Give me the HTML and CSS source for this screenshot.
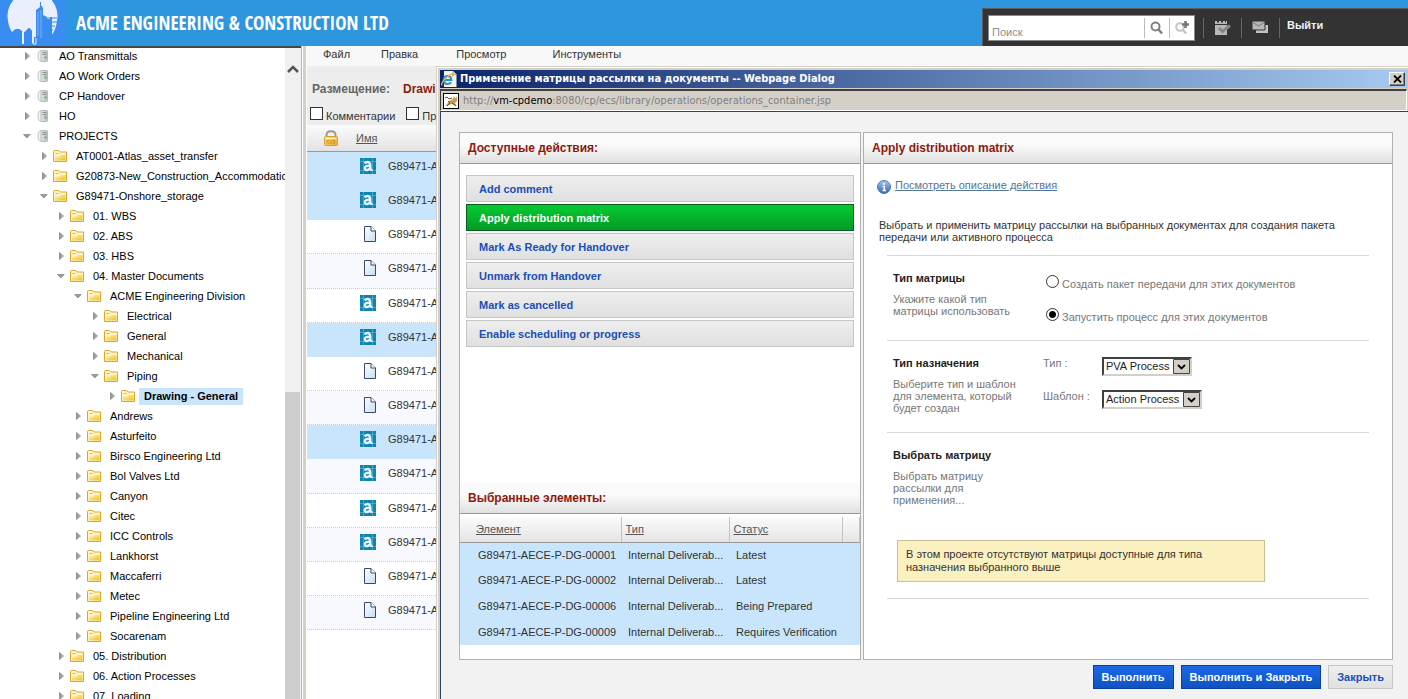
FILE: index.html
```html
<!DOCTYPE html>
<html lang="ru">
<head>
<meta charset="utf-8">
<title>ACME Engineering &amp; Construction Ltd</title>
<link rel="stylesheet" href="styles.css">
</head>
<body>
<svg class="defs" width="0" height="0" aria-hidden="true">
  <defs>
    <linearGradient id="gFolder" x1="0" y1="0" x2="1" y2="1"><stop offset="0" stop-color="#fff3b8"/><stop offset="1" stop-color="#f0c020"/></linearGradient>
    <linearGradient id="gArrow" x1="0" y1="0" x2="1" y2="0"><stop offset="0" stop-color="#8a8a8a"/><stop offset="1" stop-color="#c4c4c4"/></linearGradient>
    <linearGradient id="gDoc" x1="0" y1="0" x2="1" y2="1"><stop offset="0" stop-color="#fff"/><stop offset="1" stop-color="#c4dcf2"/></linearGradient>
    <linearGradient id="gServer" x1="0" y1="0" x2="1" y2="0"><stop offset="0" stop-color="#e6e6e6"/><stop offset="1" stop-color="#bdbdbd"/></linearGradient>
    <linearGradient id="gLock" x1="0" y1="0" x2="1" y2="1"><stop offset="0" stop-color="#ffe58a"/><stop offset="1" stop-color="#e8a628"/></linearGradient>
    <linearGradient id="gInfo" x1="0" y1="0" x2="0" y2="1"><stop offset="0" stop-color="#a8c8ea"/><stop offset="1" stop-color="#2f66b0"/></linearGradient>
    <symbol id="closed" viewBox="0 0 8 8"><path d="M2.500 .5V7.500L6.500 4Z" fill="url(#gArrow)" stroke="#8c8c8c" stroke-width=".8"/></symbol>
    <symbol id="open" viewBox="0 0 8 8"><path d="M.5 2.500H7.200L3.850 6Z" fill="#9a9a9a" stroke="#8c8c8c" stroke-width=".8"/></symbol>
    <symbol id="folder" viewBox="0 0 14 12"><path d="M.5 1.500Q.5.5 1.500.5H5.500L7 2H13.500V11.500H.5Z" fill="#fff4c4" stroke="#dba62e"/><path d="M2 9.800V6.500H6L7.500 5H12.500V10.500H2Z" fill="url(#gFolder)"/><path d="M2.500 3.500H5.500" stroke="#e6b93c"/></symbol>
    <symbol id="server" viewBox="0 0 14 14"><path d="M3.500 2Q2 3 2 7T3.500 12L5.500 12.500V1.500Z" fill="#f4f4f4" stroke="#c4c4c4"/><rect x="5" y="1.500" width="6.500" height="11" rx="1" fill="url(#gServer)" stroke="#bababa"/><path d="M6.500 3.500H10.500M6.500 5.500H10.500" stroke="#8e8e8e"/><path d="M8.500 8.500H10.500" stroke="#47c047" stroke-width="2"/></symbol>
    <symbol id="doc" viewBox="0 0 16 16"><path d="M4.500.5H11L15.500 5V15.500H4.500Z" fill="url(#gDoc)" stroke="#384a66"/><path d="M11 .5V5H15.500" fill="#fff" stroke="#384a66"/></symbol>
    <symbol id="drawing" viewBox="0 0 16 16"><rect width="16" height="16" fill="#1083b0"/><path d="M0 3.500H16M3.500 0V16M12.500 0V16M0 12.500H16" stroke="#6bbbd8" stroke-width=".6"/><path d="M4.500 5.300Q7.500 3 9.500 4.800Q10.300 5.500 10.300 8V10Q10.300 12.300 12.500 11.800M10.300 7.800Q5 7.300 4.800 10Q5 12.500 7.300 12Q9.300 11.500 10.300 9.800" fill="none" stroke="#e6f4fa" stroke-width="2.400"/></symbol>
  </defs>
</svg>
<div class="app">
  <header class="banner">
    <svg class="logo" viewBox="0 0 65 46" preserveAspectRatio="none" aria-label="ACME">
      <rect width="65" height="46" fill="#3a8df0"/>
      <path d="M8 21A25 25 0 1 1 57 21Q56 30 51 36V19H46V40H47V17L43 15V8L41 5V2H40V7L36 10V37H34V43H32V31Q29 25 26 31L24 32V44H22V31Q17 26 12 32Q9 28 8 21Z" fill="#e9effd"/>
      <path d="M46 18H57M46 22H57M46 26H55M46 30H53M46 34H52M46 38H50" stroke="#3a8df0"/>
      <path d="M46 19V40M51 17V38" stroke="#3a8df0" stroke-width="2"/>
      <path d="M38 12V36M41 10V38" stroke="#8fb9f5" stroke-width=".8"/>
      <path d="M33 36V44H36V38" fill="none" stroke="#e9effd"/>
    </svg>
    <h1 class="brand">ACME ENGINEERING &amp; CONSTRUCTION LTD</h1>
    <div class="tools">
      <form class="search">
        <input class="search-input" type="text" placeholder="Поиск" aria-label="Поиск">
        <button class="search-btn" type="button" aria-label="Найти"><svg width="14" height="14" viewBox="0 0 14 14"><circle cx="5.500" cy="5.500" r="4" fill="none" stroke="#808080" stroke-width="2"/><path d="M8.500 8.500L12 12.500" stroke="#808080" stroke-width="2.500"/></svg></button>
        <button class="search-btn" type="button" aria-label="Расширенный поиск"><svg width="14" height="14" viewBox="0 0 14 14"><circle cx="5" cy="6" r="3.800" fill="none" stroke="#c4c4c4" stroke-width="2"/><path d="M8 9L11 12.500" stroke="#c4c4c4" stroke-width="2.500"/><path d="M10.500 0V7M7 3.500H14" stroke="#777" stroke-width="2.600"/></svg></button>
      </form>
      <button class="tool" type="button" aria-label="Задачи"><svg width="16" height="14" viewBox="0 0 16 14"><path d="M0 0H2V1.500H4V0H6V1.500H8V0H10V1.500H11V0H12V3H0ZM0 4H12V14H0Z" fill="#b8b8b8"/><path d="M4 7L7.500 10.500L15 4.500" fill="none" stroke="#858585" stroke-width="3"/></svg></button>
      <button class="tool" type="button" aria-label="Сообщения"><svg width="17" height="13" viewBox="0 0 17 13"><path d="M4 4H16V12H4Z" fill="#c4c4c4"/><path d="M0 0H13V9H0Z" fill="#b8b8b8" stroke="#333"/><path d="M1 1.500L6.500 5L12 1.500" fill="none" stroke="#777"/></svg></button>
      <a class="logout" href="#">Выйти</a>
    </div>
  </header>
  <div class="main">
    <nav class="sidebar" aria-label="Проекты">
      <ul class="tree">
        <li class="node"><button class="tw" aria-label="Развернуть"><svg><use href="#closed"/></svg></button><svg class="ico"><use href="#server"/></svg><a href="#">AO Transmittals</a></li>
        <li class="node"><button class="tw" aria-label="Развернуть"><svg><use href="#closed"/></svg></button><svg class="ico"><use href="#server"/></svg><a href="#">AO Work Orders</a></li>
        <li class="node"><button class="tw" aria-label="Развернуть"><svg><use href="#closed"/></svg></button><svg class="ico"><use href="#server"/></svg><a href="#">CP Handover</a></li>
        <li class="node"><button class="tw" aria-label="Развернуть"><svg><use href="#closed"/></svg></button><svg class="ico"><use href="#server"/></svg><a href="#">HO</a></li>
        <li class="node"><button class="tw" aria-label="Свернуть"><svg><use href="#open"/></svg></button><svg class="ico"><use href="#server"/></svg><a href="#">PROJECTS</a></li>
        <li class="node d1"><button class="tw" aria-label="Развернуть"><svg><use href="#closed"/></svg></button><svg class="ico"><use href="#folder"/></svg><a href="#">AT0001-Atlas_asset_transfer</a></li>
        <li class="node d1"><button class="tw" aria-label="Развернуть"><svg><use href="#closed"/></svg></button><svg class="ico"><use href="#folder"/></svg><a href="#">G20873-New_Construction_Accommodation</a></li>
        <li class="node d1"><button class="tw" aria-label="Свернуть"><svg><use href="#open"/></svg></button><svg class="ico"><use href="#folder"/></svg><a href="#">G89471-Onshore_storage</a></li>
        <li class="node d2"><button class="tw" aria-label="Развернуть"><svg><use href="#closed"/></svg></button><svg class="ico"><use href="#folder"/></svg><a href="#">01. WBS</a></li>
        <li class="node d2"><button class="tw" aria-label="Развернуть"><svg><use href="#closed"/></svg></button><svg class="ico"><use href="#folder"/></svg><a href="#">02. ABS</a></li>
        <li class="node d2"><button class="tw" aria-label="Развернуть"><svg><use href="#closed"/></svg></button><svg class="ico"><use href="#folder"/></svg><a href="#">03. HBS</a></li>
        <li class="node d2"><button class="tw" aria-label="Свернуть"><svg><use href="#open"/></svg></button><svg class="ico"><use href="#folder"/></svg><a href="#">04. Master Documents</a></li>
        <li class="node d3"><button class="tw" aria-label="Свернуть"><svg><use href="#open"/></svg></button><svg class="ico"><use href="#folder"/></svg><a href="#">ACME Engineering Division</a></li>
        <li class="node d4"><button class="tw" aria-label="Развернуть"><svg><use href="#closed"/></svg></button><svg class="ico"><use href="#folder"/></svg><a href="#">Electrical</a></li>
        <li class="node d4"><button class="tw" aria-label="Развернуть"><svg><use href="#closed"/></svg></button><svg class="ico"><use href="#folder"/></svg><a href="#">General</a></li>
        <li class="node d4"><button class="tw" aria-label="Развернуть"><svg><use href="#closed"/></svg></button><svg class="ico"><use href="#folder"/></svg><a href="#">Mechanical</a></li>
        <li class="node d4"><button class="tw" aria-label="Свернуть"><svg><use href="#open"/></svg></button><svg class="ico"><use href="#folder"/></svg><a href="#">Piping</a></li>
        <li class="node d5 current"><button class="tw" aria-label="Развернуть"><svg><use href="#closed"/></svg></button><svg class="ico"><use href="#folder"/></svg><a href="#">Drawing - General</a></li>
        <li class="node d3"><button class="tw" aria-label="Развернуть"><svg><use href="#closed"/></svg></button><svg class="ico"><use href="#folder"/></svg><a href="#">Andrews</a></li>
        <li class="node d3"><button class="tw" aria-label="Развернуть"><svg><use href="#closed"/></svg></button><svg class="ico"><use href="#folder"/></svg><a href="#">Asturfeito</a></li>
        <li class="node d3"><button class="tw" aria-label="Развернуть"><svg><use href="#closed"/></svg></button><svg class="ico"><use href="#folder"/></svg><a href="#">Birsco Engineering Ltd</a></li>
        <li class="node d3"><button class="tw" aria-label="Развернуть"><svg><use href="#closed"/></svg></button><svg class="ico"><use href="#folder"/></svg><a href="#">Bol Valves Ltd</a></li>
        <li class="node d3"><button class="tw" aria-label="Развернуть"><svg><use href="#closed"/></svg></button><svg class="ico"><use href="#folder"/></svg><a href="#">Canyon</a></li>
        <li class="node d3"><button class="tw" aria-label="Развернуть"><svg><use href="#closed"/></svg></button><svg class="ico"><use href="#folder"/></svg><a href="#">Citec</a></li>
        <li class="node d3"><button class="tw" aria-label="Развернуть"><svg><use href="#closed"/></svg></button><svg class="ico"><use href="#folder"/></svg><a href="#">ICC Controls</a></li>
        <li class="node d3"><button class="tw" aria-label="Развернуть"><svg><use href="#closed"/></svg></button><svg class="ico"><use href="#folder"/></svg><a href="#">Lankhorst</a></li>
        <li class="node d3"><button class="tw" aria-label="Развернуть"><svg><use href="#closed"/></svg></button><svg class="ico"><use href="#folder"/></svg><a href="#">Maccaferri</a></li>
        <li class="node d3"><button class="tw" aria-label="Развернуть"><svg><use href="#closed"/></svg></button><svg class="ico"><use href="#folder"/></svg><a href="#">Metec</a></li>
        <li class="node d3"><button class="tw" aria-label="Развернуть"><svg><use href="#closed"/></svg></button><svg class="ico"><use href="#folder"/></svg><a href="#">Pipeline Engineering Ltd</a></li>
        <li class="node d3"><button class="tw" aria-label="Развернуть"><svg><use href="#closed"/></svg></button><svg class="ico"><use href="#folder"/></svg><a href="#">Socarenam</a></li>
        <li class="node d2"><button class="tw" aria-label="Развернуть"><svg><use href="#closed"/></svg></button><svg class="ico"><use href="#folder"/></svg><a href="#">05. Distribution</a></li>
        <li class="node d2"><button class="tw" aria-label="Развернуть"><svg><use href="#closed"/></svg></button><svg class="ico"><use href="#folder"/></svg><a href="#">06. Action Processes</a></li>
        <li class="node d2"><button class="tw" aria-label="Развернуть"><svg><use href="#closed"/></svg></button><svg class="ico"><use href="#folder"/></svg><a href="#">07. Loading</a></li>
      </ul>
      <div class="scrollbar">
        <button class="scroll-up" type="button" aria-label="Вверх"><svg width="12" height="8" viewBox="0 0 12 8"><path d="M1 7L6 2L11 7" fill="none" stroke="#555" stroke-width="2.500"/></svg></button>
        <div class="scroll-thumb"></div>
      </div>
    </nav>
    <div class="splitter"></div>
    <main class="content">
      <div class="menubar">
        <a href="#">Файл</a><a href="#">Правка</a><a href="#">Просмотр</a><a href="#">Инструменты</a>
      </div>
      <div class="location">
        <div class="place"><b class="place-label">Размещение:</b><b class="place-name">Drawi</b></div>
        <div class="filters">
          <label><input class="check" type="checkbox"><span>Комментарии</span></label>
          <label><input class="check" type="checkbox"><span>Пр</span></label>
        </div>
      </div>
      <div class="list-head">
        <svg width="16" height="16" viewBox="0 0 16 16" aria-hidden="true"><path d="M3.500 8V5Q3.500 1.300 8 1.300T12.500 5V8" fill="none" stroke="#9a9a9a" stroke-width="2"/><rect x="1.500" y="6.500" width="13" height="9" rx="1" fill="url(#gLock)" stroke="#dba02c"/><path d="M2.500 8.500H13.500" stroke="#fff0a8"/><path d="M4 10V13.500M5 10.500H6.500M5 13H6.500M8 10V14M9.500 10.500H11M11.500 10V13.500M9.500 13H11" stroke="#c98a18"/></svg>
        <a href="#">Имя</a>
      </div>
      <ul class="files">
        <li class="file on"><svg><use href="#drawing"/></svg><span>G89471-A</span></li>
        <li class="file on"><svg><use href="#drawing"/></svg><span>G89471-A</span></li>
        <li class="file"><svg><use href="#doc"/></svg><span>G89471-A</span></li>
        <li class="file"><svg><use href="#doc"/></svg><span>G89471-A</span></li>
        <li class="file"><svg><use href="#drawing"/></svg><span>G89471-A</span></li>
        <li class="file on"><svg><use href="#drawing"/></svg><span>G89471-A</span></li>
        <li class="file"><svg><use href="#doc"/></svg><span>G89471-A</span></li>
        <li class="file"><svg><use href="#doc"/></svg><span>G89471-A</span></li>
        <li class="file on"><svg><use href="#drawing"/></svg><span>G89471-A</span></li>
        <li class="file"><svg><use href="#drawing"/></svg><span>G89471-A</span></li>
        <li class="file"><svg><use href="#drawing"/></svg><span>G89471-A</span></li>
        <li class="file"><svg><use href="#drawing"/></svg><span>G89471-A</span></li>
        <li class="file"><svg><use href="#doc"/></svg><span>G89471-A</span></li>
        <li class="file"><svg><use href="#doc"/></svg><span>G89471-A</span></li>
      </ul>
    </main>
  </div>

  <section class="dialog" role="dialog" aria-labelledby="dlg-title">
    <div class="titlebar">
      <svg width="16" height="16" viewBox="0 0 16 16" aria-hidden="true"><path d="M3 0H12L15.500 3.500V16H3Z" fill="#f6f3e4"/><path d="M12 0V3.500H15.500" fill="#d2cdb8" stroke="#8c8878" stroke-width=".6"/><path d="M2.800 9H10.300Q10 5 6.500 5T2.800 9Q3 13 6.500 13Q9 13 10 11.200" fill="none" stroke="#2b8fdc" stroke-width="2.200"/><path d="M1 14.500Q-.5 12 5 7T12.300 3Q12.500 4 11 5.500" fill="none" stroke="#e8bd2c" stroke-width="1.300"/></svg>
      <h2 class="dialog-title" id="dlg-title">Применение матрицы рассылки на документы -- Webpage Dialog</h2>
      <button class="close" type="button" aria-label="Закрыть окно"><svg width="9" height="8" viewBox="0 0 9 8"><path d="M1 .5L8 7.500M8 .5L1 7.500" stroke="#000" stroke-width="1.800"/></svg></button>
    </div>
    <div class="address">
      <svg width="16" height="16" viewBox="0 0 16 16" aria-hidden="true"><rect x=".5" y=".5" width="15" height="15" fill="#fff" stroke="#000"/><path d="M6 8L10 6L11 3L12 5H13L14 3V8L12 10L14 13L9 11L6 12L2 13L5 10Z" fill="#c99b50"/><path d="M2 5L4 4L6 6L9 5M5 8L7 10L4 13M9 10L13 13" fill="none" stroke="#5a4a36"/></svg>
      <span class="url">http://<b>vm-cpdemo</b>:8080/cp/ecs/library/operations/operations_container.jsp</span>
    </div>
    <div class="dialog-body">
      <div class="panels">
        <section class="panel panel-left">
          <h3 class="panel-title">Доступные действия:</h3>
          <div class="actions">
            <button class="action" type="button">Add comment</button>
            <button class="action active" type="button">Apply distribution matrix</button>
            <button class="action" type="button">Mark As Ready for Handover</button>
            <button class="action" type="button">Unmark from Handover</button>
            <button class="action" type="button">Mark as cancelled</button>
            <button class="action" type="button">Enable scheduling or progress</button>
          </div>
          <h3 class="panel-title">Выбранные элементы:</h3>
          <table class="items">
            <thead><tr><th class="c1"><a href="#">Элемент</a></th><th class="c2"><a href="#">Тип</a></th><th class="c3"><a href="#">Статус</a></th><th></th></tr></thead>
            <tbody>
              <tr><td>G89471-AECE-P-DG-00001</td><td>Internal Deliverab...</td><td>Latest</td><td></td></tr>
              <tr><td>G89471-AECE-P-DG-00002</td><td>Internal Deliverab...</td><td>Latest</td><td></td></tr>
              <tr><td>G89471-AECE-P-DG-00006</td><td>Internal Deliverab...</td><td>Being Prepared</td><td></td></tr>
              <tr><td>G89471-AECE-P-DG-00009</td><td>Internal Deliverab...</td><td>Requires Verification</td><td></td></tr>
            </tbody>
          </table>
        </section>
        <section class="panel panel-right">
          <h3 class="panel-title">Apply distribution matrix</h3>
          <div class="form">
            <a class="info" href="#"><svg width="14" height="14" viewBox="0 0 14 14" aria-hidden="true"><circle cx="7" cy="7" r="6.500" fill="url(#gInfo)" stroke="#4b7ab8"/><path d="M7 3V5M5.500 6.500H7.300V10.500M5.500 10.500H9" fill="none" stroke="#fff" stroke-width="1.500"/></svg><span>Посмотреть описание действия</span></a>
            <p class="lead">Выбрать и применить матрицу рассылки на выбранных документах для создания пакета передачи или активного процесса</p>
            <div class="block">
              <div class="about"><h4>Тип матрицы</h4><p>Укажите какой тип матрицы использовать</p></div>
              <div class="radios">
                <label><input class="radio" type="radio" name="kind"><span>Создать пакет передачи для этих документов</span></label>
                <label><input class="radio" type="radio" name="kind" checked><span>Запустить процесс для этих документов</span></label>
              </div>
            </div>
            <div class="block">
              <div class="about"><h4>Тип назначения</h4><p>Выберите тип и шаблон для элемента, который будет создан</p></div>
              <div class="fields">
                <label for="type">Тип :</label><span class="pick"><select id="type"><option>PVA Process</option></select></span>
                <label for="tpl">Шаблон :</label><span class="pick"><select id="tpl"><option>Action Process</option></select></span>
              </div>
            </div>
            <div class="block">
              <div class="about"><h4>Выбрать матрицу</h4><p>Выбрать матрицу рассылки для применения...</p></div>
            </div>
            <p class="notice">В этом проекте отсутствуют матрицы доступные для типа назначения выбранного выше</p>
            <hr class="rule">
          </div>
        </section>
      </div>
      <div class="buttons">
        <button class="btn primary" type="button">Выполнить</button>
        <button class="btn primary" type="button">Выполнить и Закрыть</button>
        <button class="btn" type="button">Закрыть</button>
      </div>
    </div>
  </section>
</div>
</body>
</html>
```

FILE: styles.css
```css
* { box-sizing: border-box; }

body {
  margin: 0;
  font: 11px/12px "Liberation Sans", Arial, sans-serif;
  color: #333;
  background: #fff;
}

h1, h2, h3, h4, p, ul { margin: 0; padding: 0; }
ul { list-style: none; }
button, input, select { font: inherit; color: inherit; padding: 0; margin: 0; }
.defs { position: absolute; }

.app {
  position: relative;
  display: flex;
  flex-direction: column;
  height: 100vh;
  overflow: hidden;
}

/* Banner */
.banner {
  display: flex;
  flex: none;
  align-items: center;
  height: 46px;
  background: #2e95df;
}
.logo { flex: none; width: 65px; height: 46px; }
.brand {
  flex: 1;
  padding-left: 11px;
  font: 300 19px/28px "Open Sans Condensed", "Liberation Sans Narrow", "Roboto Condensed", sans-serif;
  color: #fff;
  white-space: nowrap;
}
.tools {
  display: flex;
  align-items: center;
  align-self: flex-end;
  width: 426px;
  height: 38px;
  padding-left: 5px;
  border: solid #5c5c5c;
  border-width: 1px 0 0 1px;
  background: #333;
}
.search {
  display: flex;
  width: 207px;
  height: 26px;
  margin-right: 8px;
  border: 1px solid #8a8a8a;
  background: #fff;
}
.search-input {
  flex: 1;
  min-width: 0;
  padding: 8px 3px 0;
  border: 0;
  background: none;
}
.search-input::placeholder { color: #8e8e8e; }
.search-btn {
  display: flex;
  align-items: center;
  justify-content: center;
  width: 25px;
  height: 20px;
  margin-top: 2px;
  border: 0;
  border-left: 1px solid #bbb;
  background: none;
}
.tool {
  display: flex;
  align-items: center;
  justify-content: center;
  width: 38px;
  height: 20px;
  border: 0;
  border-left: 1px solid #666;
  background: none;
}
.logout {
  height: 20px;
  padding: 1px 0 0 7px;
  border-left: 1px solid #666;
  font-weight: bold;
  color: #eaf4fb;
  text-decoration: none;
}

/* Tree */
.main { display: flex; flex: 1; min-height: 0; }
.sidebar {
  display: flex;
  flex: none;
  width: 301px;
  box-shadow: inset 0 2px #4a4444;
  overflow: hidden;
}
.tree { flex: 1; min-width: 0; overflow: hidden; }
.node {
  display: flex;
  align-items: center;
  height: 20px;
  padding-left: 23px;
  white-space: nowrap;
}
.d1 { padding-left: 40px; }
.d2 { padding-left: 57px; }
.d3 { padding-left: 74px; }
.d4 { padding-left: 91px; }
.d5 { padding-left: 108px; }
.tw {
  flex: none;
  width: 8px;
  height: 8px;
  margin-right: 5px;
  border: 0;
  background: none;
}
.tw svg { display: block; width: 8px; height: 8px; }
.ico { flex: none; width: 14px; height: 14px; margin-right: 4px; }
.node a { padding: 2px 5px; line-height: 13px; color: #000; text-decoration: none; }
.current a { font-weight: bold; background: #c9e5fb; }
.scrollbar {
  display: flex;
  flex-direction: column;
  flex: none;
  width: 16px;
  margin-top: 2px;
  background: #f0f0f0;
}
.scroll-up { height: 42px; border: 0; background: none; }
.scroll-thumb { flex: 1; margin: 302px 1px 0 0; background: #cdcdcd; }
.splitter {
  flex: none;
  width: 6px;
  border-left: 1px solid #b5b5b5;
  border-right: 1px solid #fff;
  background: linear-gradient(90deg, #fff 1px, #d4d0c8 1px);
}

/* Document list */
.content { flex: 1; min-width: 0; }
.menubar {
  display: flex;
  height: 20px;
  gap: 31px;
  padding: 2px 16px;
  background: #f8f8f8;
}
.menubar a { color: #333; text-decoration: none; }
.menubar a:nth-child(3) { margin-left: 7px; }
.menubar a:nth-child(4) { margin-left: 15px; }
.location { height: 59px; padding: 16px 3px 0; background: #ededed; }
.place { display: flex; gap: 13px; padding-left: 2px; font-size: 12px; line-height: 14px; }
.place-label { color: #666; }
.place-name { color: #8b1a0e; }
.filters { display: flex; gap: 11px; margin-top: 11px; }
.filters label { display: flex; gap: 3px; }
.filters span { padding-top: 3px; }
.check {
  appearance: none;
  width: 13px;
  height: 13px;
  border: 1px solid #333;
  background: #fff;
}
.list-head {
  display: flex;
  align-items: center;
  gap: 17px;
  height: 27px;
  padding-left: 16px;
  border-bottom: 1px solid #999;
  background: linear-gradient(#fbfbfb, #e2e2e2);
}
.list-head a { color: #555; }
.file {
  display: flex;
  align-items: flex-start;
  gap: 12px;
  height: 34px;
  padding: 6px 0 0 53px;
  border-bottom: 1px dotted #ccc;
}
.file:nth-child(6n+4) { height: 35px; }
.file:nth-child(even) { background: #f8f9ff; }
.file.on { border-color: #c9e5fb; background: #c9e5fb; }
.file svg { flex: none; width: 16px; height: 16px; }
.file span { padding-top: 2px; white-space: nowrap; }

/* Dialog window */
.dialog {
  position: absolute;
  top: 66px;
  right: 0;
  bottom: 0;
  left: 436px;
  display: flex;
  flex-direction: column;
  padding: 3px 0 0 2px;
  border: solid #d4d0c8;
  border-width: 1px 0 0 1px;
  background: linear-gradient(90deg, #fff 1px, #d4d0c8 1px);
  box-shadow: inset 0 1px #fff;
}
.titlebar {
  display: flex;
  flex: none;
  align-items: center;
  gap: 3px;
  height: 18px;
  margin-left: 1px;
  padding: 0 3px 0 1px;
  background: linear-gradient(90deg, #0a246a, #a6caf0);
}
.dialog-title {
  flex: 1;
  font: bold 11px/14px "DejaVu Sans Condensed", "DejaVu Sans", sans-serif;
  color: #fff;
  white-space: nowrap;
}
.close {
  display: flex;
  align-items: center;
  justify-content: center;
  width: 16px;
  height: 14px;
  border: 1px solid;
  border-color: #fff #404040 #404040 #fff;
  background: #d4d0c8;
  box-shadow: inset -1px -1px #808080;
}
.address {
  display: flex;
  flex: none;
  align-items: center;
  gap: 4px;
  height: 22px;
  margin: 1px 1px 0;
  padding-left: 2px;
  border: solid #404040;
  border-width: 2px 0 0 1px;
  border-right: 1px solid #fff;
  border-bottom: 1px solid #fff;
  background: #d4d0c8;
}
.url {
  font: 11px/14px "DejaVu Sans Condensed", "DejaVu Sans", sans-serif;
  color: #808080;
  white-space: nowrap;
}
.url b { font-weight: normal; color: #000; }
.dialog-body {
  display: flex;
  flex-direction: column;
  flex: 1;
  min-height: 0;
  margin-left: 1px;
  padding: 20px 15px 10px 18px;
  border: solid #404040;
  border-width: 1px 0 0 1px;
  border-left-color: #2f4468;
  background: #f2f2f2;
}
.panels { display: flex; flex: 1; min-height: 0; gap: 2px; }
.panel {
  display: flex;
  flex-direction: column;
  border: 1px solid #b0b0b0;
  background: #fff;
}
.panel-left { flex: none; width: 402px; padding-bottom: 14px; }
.panel-right { flex: 1; min-width: 0; }
.panel-title {
  flex: none;
  padding: 8px;
  border-bottom: 1px solid #999;
  font-size: 12px;
  line-height: 14px;
  color: #8b1a0e;
  background: linear-gradient(#fafafa 40%, #e0e0e0);
}
.actions {
  display: flex;
  flex-direction: column;
  flex: 1;
  gap: 2px;
  padding: 11px 6px;
}
.action {
  height: 27px;
  padding: 0 12px;
  border: 1px solid #c6c6c6;
  font-weight: bold;
  color: #1a4fb4;
  text-align: left;
  background: linear-gradient(#eee, #e0e0e0);
}
.action.active {
  border-color: #0a5c1c;
  color: #fff;
  background: linear-gradient(#04cc33, #049a26);
}

.items { width: 100%; margin-top: 3px; border-collapse: collapse; table-layout: fixed; }
.items th {
  height: 25px;
  padding: 0 4px;
  border-right: 1px solid #c4c4c4;
  border-bottom: 1px solid #999;
  font-weight: normal;
  text-align: left;
  background: linear-gradient(#fbfbfb, #e4e4e4);
}
.items th a { color: #555; }
.items .c1 { width: 161px; padding-left: 16px; }
.items .c2 { width: 108px; }
.items .c3 { width: 113px; }
.items td { height: 26px; padding: 0 0 0 7px; white-space: nowrap; background: #c9e5fb; }
.items td:first-child { padding-left: 18px; }
.items tr:first-child td { height: 25px; }

/* Matrix form */
.form { padding: 15px 23px 0 15px; }
.info { display: flex; gap: 4px; margin-left: -2px; color: #54769c; }
.info svg { margin-top: 1px; }
.lead { margin: 25px 0 12px; }
.block {
  display: flex;
  gap: 25px;
  margin-left: 8px;
  padding: 16px 6px 0;
  border-top: 1px solid #d8d8d8;
  color: #777;
}
.about { width: 125px; padding-bottom: 18px; }
.about h4 { margin-bottom: 9px; color: #222; }
.radios { display: flex; flex-direction: column; gap: 18px; padding: 3px 0 17px 3px; }
.radios label { display: flex; gap: 3px; }
.radios span { padding-top: 3px; }
.radio {
  appearance: none;
  width: 13px;
  height: 13px;
  border: 1px solid #333;
  border-radius: 50%;
  background: #fff;
}
.radio:checked { background: radial-gradient(#000 3px, #fff 4px); }
.fields {
  display: grid;
  grid-template-columns: 59px auto;
  grid-auto-rows: 33px;
  align-items: start;
}
.pick select {
  appearance: none;
  height: 19px;
  padding: 0 20px 1px 2px;
  border: 2px solid;
  border-color: #404040 #d4d0c8 #d4d0c8 #404040;
  border-radius: 0;
  color: #222;
  background:
    url("data:image/svg+xml,%3Csvg xmlns='http://www.w3.org/2000/svg' width='17' height='15'%3E%3Cpath d='M.5.5h16v14H.5z' fill='%23d4d0c8' stroke='%23444'/%3E%3Cpath d='M5 6l3.500 3.500L12 6' fill='none' stroke='%23000' stroke-width='1.800'/%3E%3C/svg%3E") right center no-repeat #fff;
}
.notice {
  max-width: 368px;
  margin: 16px 0 16px 18px;
  padding: 7px 8px;
  border: 1px solid #c8bf94;
  line-height: 13px;
  background: #faf0c0;
}
.rule { margin: 0 0 0 8px; border: 0; border-top: 1px solid #d8d8d8; }

.buttons { display: flex; justify-content: flex-end; gap: 7px; margin-top: 5px; }
.btn {
  height: 24px;
  padding: 0 8px;
  border: 1px solid #c6c6c6;
  font-weight: bold;
  color: #1a4fb4;
  background: linear-gradient(#eee, #e0e0e0);
}
.btn.primary { border-color: #0c3f96; color: #fff; background: linear-gradient(#1b68e8, #1052c0); }
```
